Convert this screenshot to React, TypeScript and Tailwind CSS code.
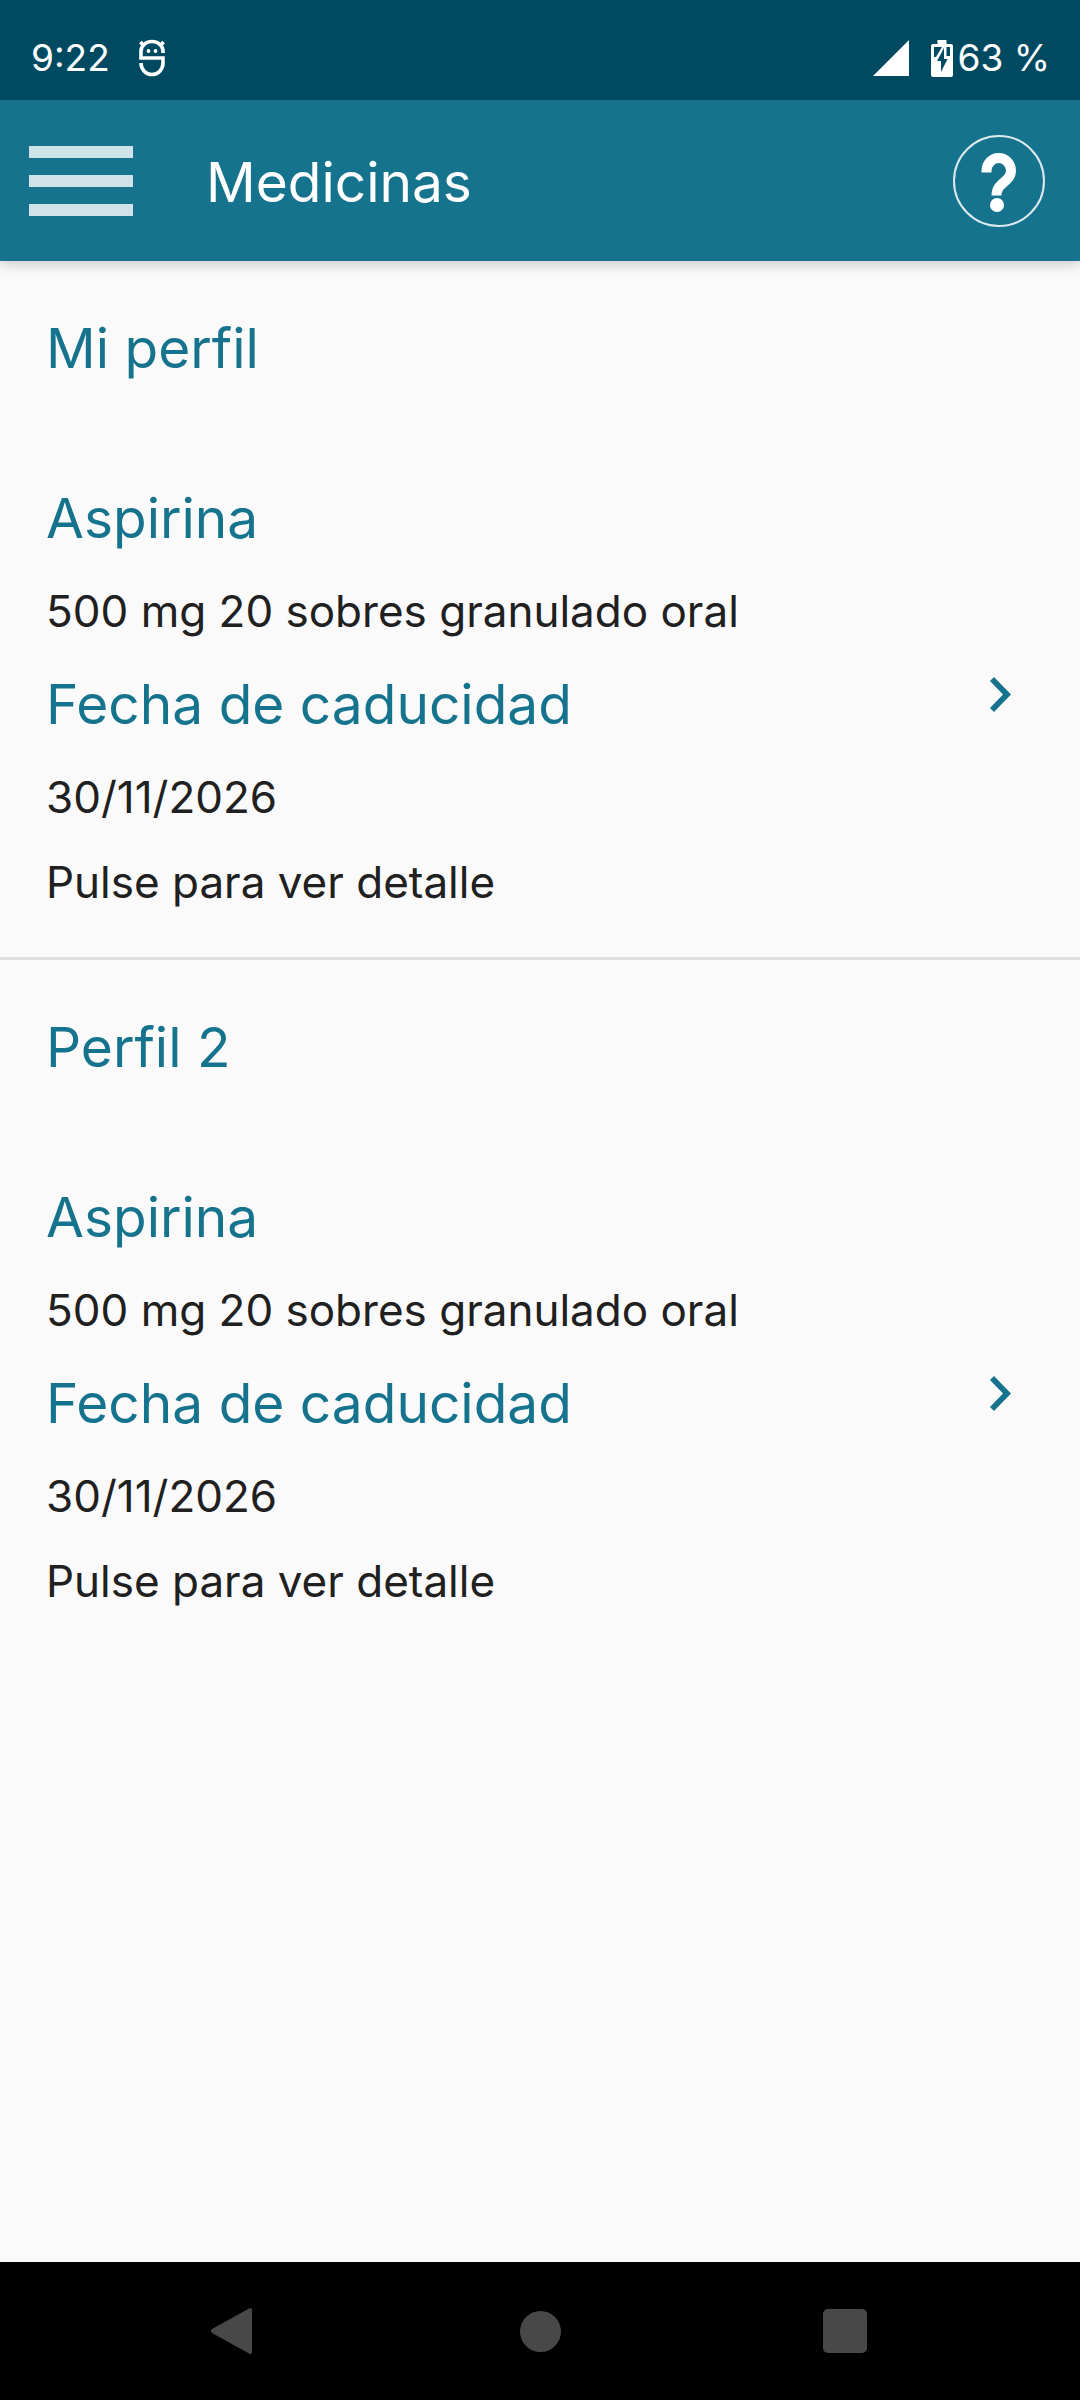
import React from 'react';

interface Medicine {
    name: string;
    description: string;
    expiry: string;
}

interface Profile {
    name: string;
    medicines: Medicine[];
}

const profiles: Profile[] = [
    {
        name: 'Mi perfil',
        medicines: [
            {
                name: 'Aspirina',
                description: '500 mg 20 sobres granulado oral',
                expiry: '30/11/2026',
            },
        ],
    },
    {
        name: 'Perfil 2',
        medicines: [
            {
                name: 'Aspirina',
                description: '500 mg 20 sobres granulado oral',
                expiry: '30/11/2026',
            },
        ],
    },
];

const StatusBar: React.FC = () => (
    <div className="relative z-20 flex h-[100px] items-center justify-between bg-[#004a61] pt-4 pr-[30px] pl-[31px] text-[37px] leading-[48px] text-white">
        <div className="flex items-center gap-7">
            <span>9:22</span>
            <svg width="28" height="38" viewBox="0 0 28 38" fill="none" stroke="currentColor">
                <path
                    d="M25 14V12A11 9.500 0 0 0 3 12V19H25V24A11 11.500 0 0 1 3 24V24"
                    strokeWidth="3.600"
                />
                <path d="M5 6 2.500 3M23 6 25.500 3" strokeWidth="3.600" />
                <circle cx="10.500" cy="12" r="1.900" fill="currentColor" stroke="none" />
                <circle cx="17.500" cy="12" r="1.900" fill="currentColor" stroke="none" />
            </svg>
        </div>
        <div className="flex items-center">
            <svg width="36" height="36" viewBox="0 0 36 36" fill="currentColor">
                <path d="M36 0V36H0z" />
            </svg>
            <svg
                className="mr-1 ml-[22px]"
                width="22"
                height="37"
                viewBox="0 0 22 37"
                fill="currentColor"
            >
                <path
                    fillRule="evenodd"
                    d="M6.500 0H15.500V4H20Q22 4 22 6V35Q22 37 20 37H2Q0 37 0 35V6Q0 4 2 4H6.500zM3 7V17H5L11 7zM13 8 6 21H10V32L16.500 19H13zM15.500 7V16H19V7z"
                />
            </svg>
            <span>63 %</span>
        </div>
    </div>
);

const Header: React.FC = () => (
    <header className="relative z-10 flex h-[161px] items-center bg-[#16738d] pr-[35px] pl-[29px] shadow-[0_4px_12px_rgba(0,0,0,0.18)]">
        <button type="button" aria-label="Menú" className="flex w-[104px] flex-col gap-[17px]">
            <span className="h-3 w-full bg-[#d0e3e8]" />
            <span className="h-3 w-full bg-[#d0e3e8]" />
            <span className="h-3 w-full bg-[#d0e3e8]" />
        </button>
        <h1 className="ml-[73px] flex-1 pt-0.5 text-[55px] leading-[72px] text-white">
            Medicinas
        </h1>
        <button type="button" aria-label="Ayuda">
            <svg width="92" height="92" viewBox="0 0 92 92" fill="none" stroke="white">
                <circle cx="46" cy="46" r="45" strokeWidth="2" opacity="0.850" />
                <path
                    d="M33.500 37.500V36A12.200 13 0 0 1 58 36C58 47 43.500 47 43.500 60.500"
                    strokeWidth="10"
                />
                <circle cx="44" cy="70" r="7" fill="white" stroke="none" />
            </svg>
        </button>
    </header>
);

const MedicineRow: React.FC<{ medicine: Medicine }> = ({ medicine }) => (
    <a href="#detalle" className="flex items-center justify-between pr-[69px]">
        <div className="flex flex-col gap-[29px]">
            <h3 className="text-[55px] leading-[72px] text-[#16738d]">{medicine.name}</h3>
            <p className="text-[44px] leading-[56px]">{medicine.description}</p>
            <h3 className="text-[55px] leading-[72px] text-[#16738d]">Fecha de caducidad</h3>
            <p className="text-[44px] leading-[56px]">{medicine.expiry}</p>
            <p className="text-[44px] leading-[56px]">Pulse para ver detalle</p>
        </div>
        <svg className="mb-1" width="21" height="35" viewBox="0 0 21 35" fill="#16738d">
            <path d="M0 4 4 0 21 17.500 4 35 0 31 13 17.500z" />
        </svg>
    </a>
);

const NavBar: React.FC = () => (
    <nav className="flex h-[138px] items-center justify-center gap-[262px] bg-black pr-[3px] text-[#484848]">
        <button type="button" aria-label="Atrás">
            <svg width="48" height="48" viewBox="2 0 48 48" fill="currentColor">
                <path d="M41 1.500Q44 0 44 3V45Q44 48 41 46.500L4 26Q2 24 4 22z" />
            </svg>
        </button>
        <button type="button" aria-label="Inicio" className="size-[41px] rounded-full bg-current" />
        <button
            type="button"
            aria-label="Recientes"
            className="size-[44px] rounded-[5px] bg-current"
        />
    </nav>
);

const App: React.FC = () => {
    return (
        <div className="flex min-h-screen flex-col bg-[#fafafa] font-['Inter','Open_Sans',sans-serif] text-[#202020]">
            <StatusBar />
            <Header />

            {/* Profiles */}
            <main className="flex-1 divide-y-3 divide-[#e0e0e0]">
                {profiles.map((profile) => (
                    <section
                        key={profile.name}
                        className="flex flex-col gap-[98px] pt-[51px] pb-[47px] pl-[46px]"
                    >
                        <h2 className="text-[55px] leading-[72px] text-[#16738d]">
                            {profile.name}
                        </h2>
                        {profile.medicines.map((medicine) => (
                            <MedicineRow key={medicine.name} medicine={medicine} />
                        ))}
                    </section>
                ))}
            </main>

            <NavBar />
        </div>
    );
};

export default App;
